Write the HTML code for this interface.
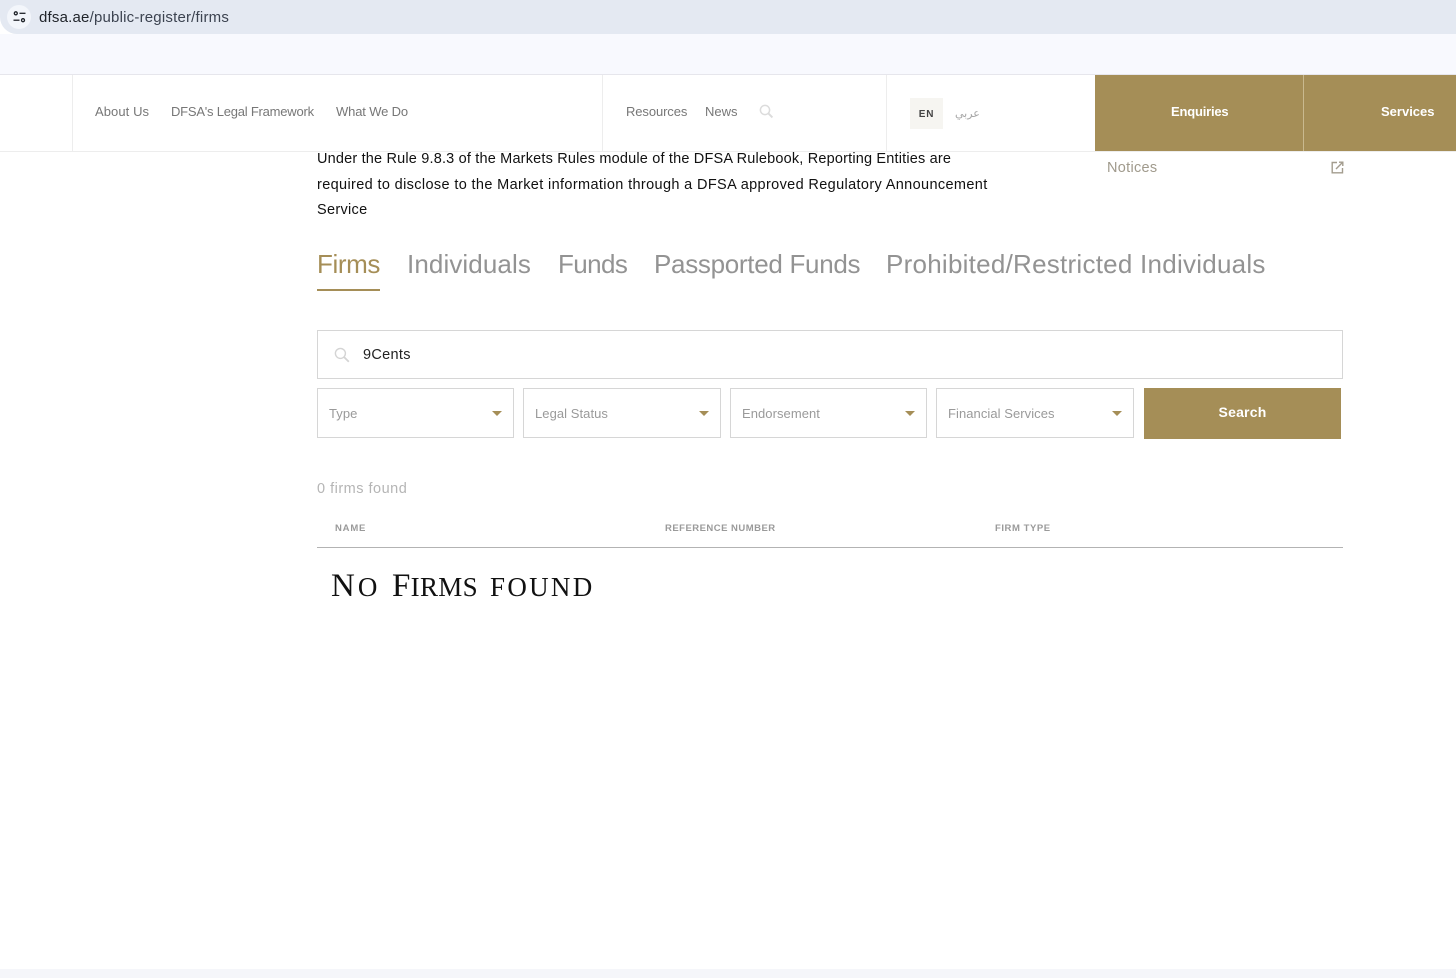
<!DOCTYPE html>
<html lang="en">
<head>
<meta charset="utf-8">
<title>DFSA Public Register - Firms</title>
<style>
html,body{margin:0;padding:0;background:#fff;width:1456px;height:978px;overflow:hidden}
body{position:relative;font-family:"Liberation Sans",sans-serif}
.a{position:absolute;white-space:nowrap}
.box{position:absolute;box-sizing:border-box;border:1px solid #d6d6d6;background:#fff}
.nav{font-size:13px;line-height:16px;color:#777;top:104px}
.tab{font-size:26px;line-height:32px;top:248px;color:#939393}
.sel{font-size:13px;line-height:16px;color:#9a9a9a;top:406px;letter-spacing:.06px}
.car{position:absolute;top:411px;width:0;height:0;border-left:5.5px solid transparent;border-right:5.5px solid transparent;border-top:5px solid #a58e57}
.th{font-size:9.5px;line-height:12px;font-weight:bold;color:#9a9a9a;top:523px}
.p{font-size:14.5px;line-height:18px;color:#111;left:317px}
.nf{position:absolute;top:567px;white-space:nowrap;font-family:"Liberation Serif",serif;font-size:33px;line-height:38px;color:#111}
.nf span{font-size:27px}
</style>
</head>
<body>
<!-- browser chrome -->
<div class="a" style="left:0;top:0;width:1456px;height:34px;background:#e4e9f2;border-radius:0 0 0 17px"></div>
<div class="a" style="left:0;top:34px;width:1456px;height:40px;background:#f8f9fe"></div>
<div class="a" style="left:0;top:74px;width:1456px;height:1px;background:#e6e6ec"></div>
<div class="a" style="left:7px;top:5px;width:24px;height:24px;border-radius:50%;background:#f3f6fb"></div>
<svg class="a" style="left:13px;top:11px" width="13" height="12" viewBox="0 0 13 12" fill="none" stroke="#1f2329" stroke-width="1.3">
<circle cx="2.8" cy="2.3" r="1.5"/><path d="M6.5 2.3h6"/><path d="M.5 9.2h6"/><circle cx="10" cy="9.2" r="1.5"/>
</svg>
<div class="a" style="left:39px;top:9px;font-size:15px;line-height:18px;letter-spacing:.2px;color:#1f2329">dfsa.ae<span style="color:#3c4350">/public-register/firms</span></div>

<!-- header -->
<div class="a" style="left:0;top:75px;width:1456px;height:77px;background:#fff;border-bottom:1px solid #ededed;box-sizing:border-box"></div>
<div class="a" style="left:72px;top:75px;width:1px;height:76px;background:#ededed"></div>
<div class="a" style="left:602px;top:75px;width:1px;height:76px;background:#ededed"></div>
<div class="a" style="left:886px;top:75px;width:1px;height:76px;background:#ededed"></div>
<div class="a nav" style="left:95px;letter-spacing:.08px">About Us</div>
<div class="a nav" style="left:171px;letter-spacing:-.22px">DFSA's Legal Framework</div>
<div class="a nav" style="left:336px;letter-spacing:-.15px">What We Do</div>
<div class="a nav" style="left:626px;letter-spacing:-.1px">Resources</div>
<div class="a nav" style="left:705px">News</div>
<svg class="a" style="left:759px;top:104px" width="15" height="15" viewBox="0 0 15 15" fill="none" stroke="#dcdcdc" stroke-width="1.5">
<circle cx="6" cy="6" r="4.6"/><path d="M9.4 9.4l4 4" stroke-width="2"/>
</svg>
<div class="a" style="left:910px;top:98px;width:33px;height:31px;background:#f6f5f1"></div>
<div class="a" style="left:910px;top:108px;width:33px;text-align:center;font-size:10px;line-height:13px;font-weight:bold;letter-spacing:.8px;color:#444">EN</div>
<div class="a" style="left:955px;top:107px;font-size:11px;line-height:15px;color:#a5a5a5;font-family:'Liberation Sans','DejaVu Sans',sans-serif">عربي</div>
<div class="a" style="left:1095px;top:75px;width:361px;height:76px;background:#a58e57"></div>
<div class="a" style="left:1303px;top:75px;width:1px;height:76px;background:#c9b98f"></div>
<div class="a" style="left:1171px;top:104px;font-size:13px;line-height:16px;font-weight:bold;letter-spacing:-.2px;color:#fff">Enquiries</div>
<div class="a" style="left:1381px;top:104px;font-size:13px;line-height:16px;font-weight:bold;color:#fff">Services</div>

<!-- sidebar remnant -->
<div class="a" style="left:1107px;top:160px;font-size:14.5px;line-height:17px;letter-spacing:.3px;color:#a09a8c">Notices</div>
<svg class="a" style="left:1331px;top:161px" width="13" height="13" viewBox="0 0 13 13" fill="none" stroke="#a39c8e" stroke-width="1.4">
<path d="M6 1.5H1.2v10.3h10.3V7"/><path d="M5 8L11.2 1.8"/><path d="M8 1.2h3.8V5"/>
</svg>

<!-- intro -->
<div class="a p" style="top:150px;letter-spacing:.18px">Under the Rule 9.8.3 of the Markets Rules module of the DFSA Rulebook, Reporting Entities are</div>
<div class="a p" style="top:176px;letter-spacing:.36px">required to disclose to the Market information through a DFSA approved Regulatory Announcement</div>
<div class="a p" style="top:201px;letter-spacing:.3px">Service</div>

<!-- tabs -->
<div class="a tab" style="left:317px;color:#a58e57;letter-spacing:-.4px">Firms</div>
<div class="a" style="left:317px;top:289px;width:63px;height:2px;background:#a58e57"></div>
<div class="a tab" style="left:407px;letter-spacing:.1px">Individuals</div>
<div class="a tab" style="left:558px;letter-spacing:-.6px">Funds</div>
<div class="a tab" style="left:654px;letter-spacing:-.3px">Passported Funds</div>
<div class="a tab" style="left:886px;letter-spacing:.25px">Prohibited/Restricted Individuals</div>

<!-- search -->
<div class="box" style="left:317px;top:330px;width:1026px;height:49px"></div>
<svg class="a" style="left:334px;top:347px" width="16" height="16" viewBox="0 0 16 16" fill="none" stroke="#d4d4d4" stroke-width="1.4">
<circle cx="6.4" cy="6.4" r="5"/><path d="M10 10l4.8 4.8" stroke-width="1.8"/>
</svg>
<div class="a" style="left:363px;top:347px;font-size:14.5px;line-height:17px;letter-spacing:.3px;color:#222">9Cents</div>

<div class="box" style="left:317px;top:388px;width:197px;height:50px"></div>
<div class="box" style="left:523px;top:388px;width:198px;height:50px"></div>
<div class="box" style="left:730px;top:388px;width:197px;height:50px"></div>
<div class="box" style="left:936px;top:388px;width:198px;height:50px"></div>
<div class="a sel" style="left:329px">Type</div>
<div class="a sel" style="left:535px">Legal Status</div>
<div class="a sel" style="left:742px">Endorsement</div>
<div class="a sel" style="left:948px">Financial Services</div>
<div class="car" style="left:492px"></div>
<div class="car" style="left:699px"></div>
<div class="car" style="left:905px"></div>
<div class="car" style="left:1112px"></div>
<div class="a" style="left:1144px;top:388px;width:197px;height:51px;background:#a58e57"></div>
<div class="a" style="left:1144px;top:404px;width:197px;text-align:center;font-size:14px;line-height:17px;font-weight:bold;letter-spacing:.2px;color:#fff">Search</div>

<!-- results -->
<div class="a" style="left:317px;top:481px;font-size:14.5px;line-height:17px;letter-spacing:.5px;color:#b5b5b5">0 firms found</div>
<div class="a th" style="left:335px;letter-spacing:.8px">NAME</div>
<div class="a th" style="left:665px;letter-spacing:.48px">REFERENCE NUMBER</div>
<div class="a th" style="left:995px;letter-spacing:.55px">FIRM TYPE</div>
<div class="a" style="left:317px;top:547px;width:1026px;height:1px;background:#b3b3b3"></div>
<div class="nf" style="left:331px;letter-spacing:3px">N<span>O</span></div>
<div class="nf" style="left:392px;letter-spacing:.3px">F<span>IRMS</span></div>
<div class="nf" style="left:490px;letter-spacing:2.3px"><span>FOUND</span></div>

<!-- bottom strip -->
<div class="a" style="left:0;top:969px;width:1456px;height:9px;background:#f5f6fa"></div>
</body>
</html>
